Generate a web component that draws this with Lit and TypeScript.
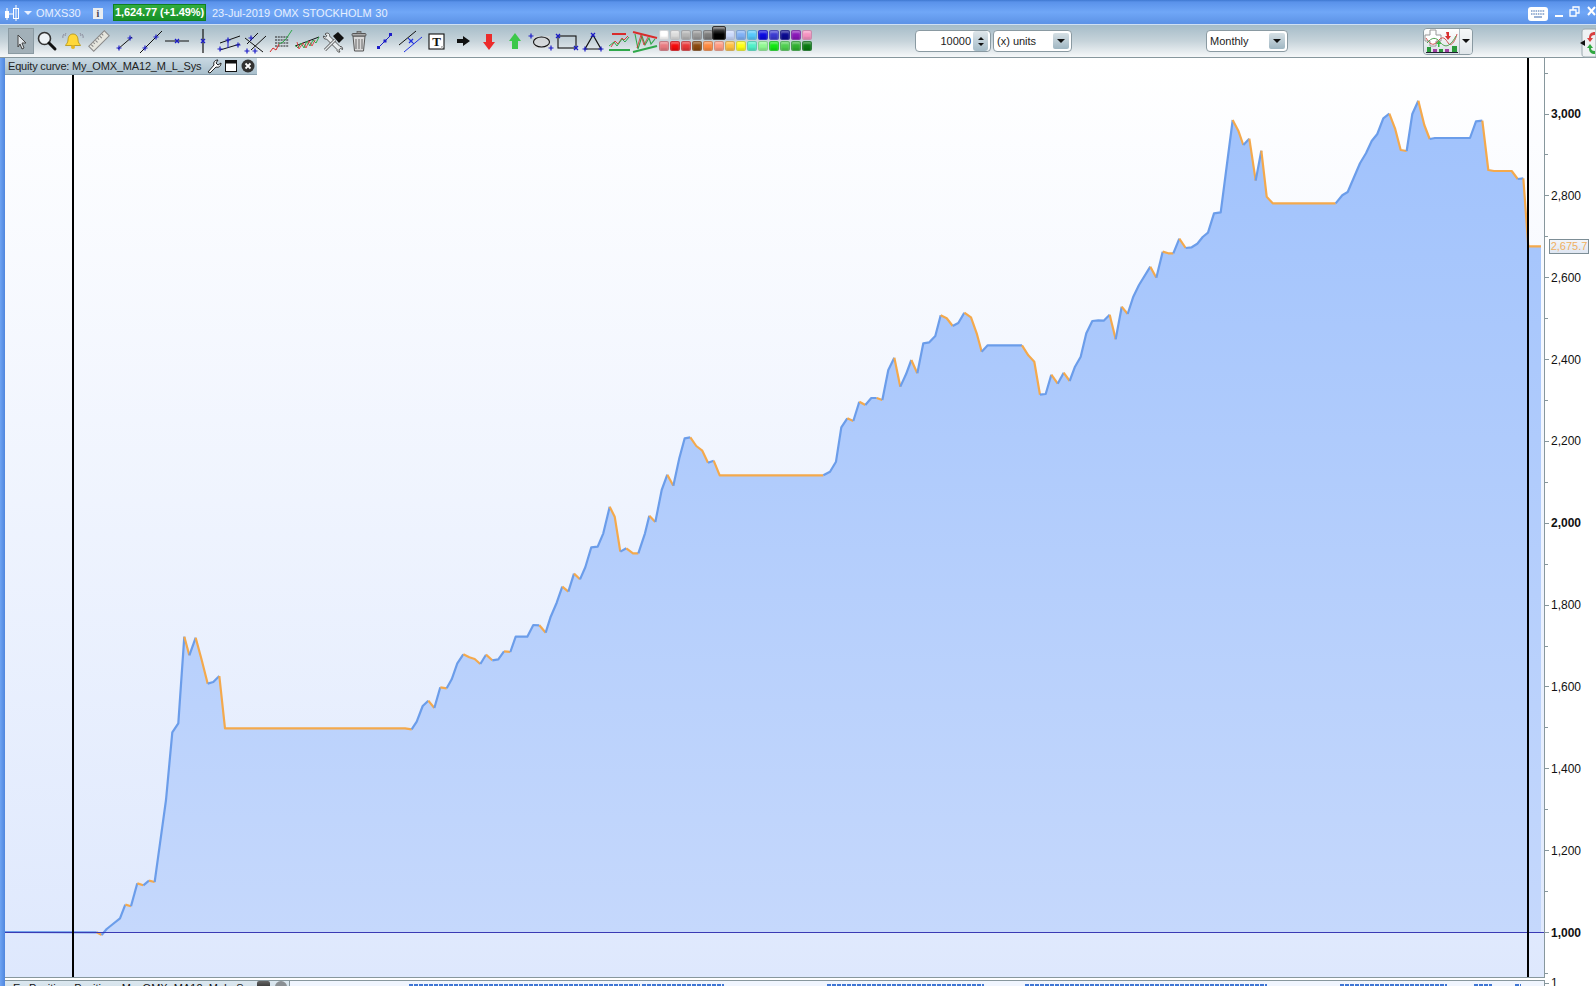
import { LitElement, html, css, svg } from "lit";
import { customElement } from "lit/decorators.js";

type P = [number, number];
const crop = (ox: number, oy: number, pts: number[][]): P[] => pts.map(([x, y]) => [ox + x / 3, oy + y / 3] as P);

const curve: P[] = [
  [5, 932],
  ...crop(60, 620, [[110,937],[125,945],[140,927],[155,915],[180,895],[196,854],[213,859],[232,790],[250,796],[267,782],[284,786],[300,670],[318,540],[337,337],[355,310],[373,50],[388,106],[407,53],[425,120],[443,191],[460,186],[478,168],[495,325],[1035,325]]),
  ...crop(400, 420, [[35,928],[50,905],[68,858],[85,842],[103,864],[121,802],[140,805],[155,778],[172,730],[190,703],[208,712],[224,717],[241,732],[258,704],[277,721],[295,718],[312,694],[331,696],[347,650],[382,650],[400,615],[418,616],[437,638],[452,590],[470,548],[487,500],[505,515],[522,461],[540,478],[556,442],[574,382],[593,380],[610,340],[629,260],[644,290],[661,395],[679,385],[699,400],[715,400],[735,340],[748,287],[766,306],[785,210],[802,164],[820,197],[838,115],[854,55],[871,52],[889,78],[907,92],[924,128],[941,122],[959,166],[1270,166]]),
  ...crop(820, 220, [[30,755],[48,725],[64,622],[82,595],[100,603],[118,545],[136,555],[154,534],[170,534],[187,540],[205,450],[223,413],[241,500],[258,463],[274,420],[292,460],[310,370],[328,367],[346,348],[362,286],[380,295],[398,318],[415,309],[433,278],[453,292],[470,340],[485,395],[503,376],[606,376],[625,406],[643,425],[660,524],[677,522],[694,464],[713,491],[731,458],[749,483],[765,440],[782,410],[799,340],[817,303],[835,301],[851,302],[869,284],[887,358],[905,260],[923,282],[940,230],[957,195],[991,140],[1009,173],[1028,95],[1045,100],[1060,100],[1078,56],[1097,84],[1115,82],[1132,71]]),
  ...crop(1190, 90, [[38,441],[54,428],[72,370],[92,367],[128,90],[145,122],[160,165],[178,146],[197,272],[214,182],[230,320],[248,340],[437,340],[457,316],[473,306],[510,220],[528,190],[545,153],[562,132],[580,85],[598,71],[615,115],[632,180],[650,183],[667,72],[685,32],[703,105],[719,147],[735,144],[840,144],[858,94],[877,92],[895,240],[912,243],[965,243],[983,267],[1000,265],[1015,469],[1053,469]]),
];

const BLUE = "#6b9dea";
const ORANGE = "#f4a94c";

function segments(): { d: string; c: string }[] {
  const out: { d: string; c: string }[] = [];
  let cur = BLUE;
  let run = `M${curve[0][0]} ${curve[0][1]}`;
  for (let i = 1; i < curve.length; i++) {
    const dy = curve[i][1] - curve[i - 1][1];
    const c = dy > 0.4 ? ORANGE : dy < -0.4 ? BLUE : cur;
    if (c !== cur) {
      out.push({ d: run, c: cur });
      run = `M${curve[i - 1][0]} ${curve[i - 1][1]}`;
      cur = c;
    }
    run += `L${curve[i][0].toFixed(1)} ${curve[i][1].toFixed(1)}`;
  }
  out.push({ d: run, c: cur });
  return out;
}

const yOf = (v: number) => 932 - (v - 1000) * 0.40925;
const fillPath =
  "M110 932" + curve.slice(1).map((p) => `L${p[0].toFixed(1)} ${p[1].toFixed(1)}`).join("") + "L1541 932Z";

const cross = (x: number, y: number, c = "#1c1cc8") =>
  svg`<path d="M${x - 2.5} ${y}h5M${x} ${y - 2.5}v5" stroke=${c} stroke-width="1.2" fill="none"/>`;
const xcross = (x: number, y: number, c = "#1c1cc8") =>
  svg`<path d="M${x - 2} ${y - 2}l4 4M${x + 2} ${y - 2}l-4 4" stroke=${c} stroke-width="1.3" fill="none"/>`;
const ln = (x1: number, y1: number, x2: number, y2: number, c = "#111", w = 1) =>
  svg`<line x1=${x1} y1=${y1} x2=${x2} y2=${y2} stroke=${c} stroke-width=${w}/>`;

const G = "#2fa84a";
const R = "#d92b2b";
const B = "#1c1cc8";

const icons = [
  svg`<path d="M10 7l8 8h-4l2 5-2 1-2-5-2 3z" fill="#dfe4e8" stroke="#444" stroke-width="1"/>`,
  svg`<circle cx="10.5" cy="10.5" r="6" fill="#eef3f6" stroke="#333" stroke-width="1.6"/><line x1="15" y1="15" x2="21" y2="21" stroke="#111" stroke-width="3" stroke-linecap="round"/>`,
  svg`<path d="M13 6c-3.500 0-5 3-5 6 0 3-2 4-2.500 5.500h15c-.5-1.500-2.500-2.500-2.500-5.500 0-3-1.500-6-5-6z" fill="#ffd83a" stroke="#b09010" stroke-width=".8"/><circle cx="13" cy="19" r="2" fill="#e8b820"/><path d="M4 6c-1 1-1.500 3-1 4M6 5c-.7.7-1 2-.8 3M22 6c1 1 1.500 3 1 4M20 5c.7.7 1 2 .8 3" stroke="#889" fill="none" stroke-width=".9"/>`,
  svg`<g transform="rotate(-45 13 13)"><rect x="2" y="9.500" width="22" height="7" fill="#e6e6de" stroke="#8a8a8a"/><path d="M5 10v3M8 10v2M11 10v3M14 10v2M17 10v3M20 10v2" stroke="#888"/></g>`,
  svg`${ln(6, 21, 20, 9)}${cross(7, 20)}${cross(18, 10)}`,
  svg`${ln(2, 25, 24, 3)}${cross(7, 20, B)}${cross(18, 9, B)}`,
  svg`${ln(1, 13, 25, 13)}${xcross(13, 13)}`,
  svg`${ln(13, 1, 13, 25, "#111", 1.2)}${xcross(13, 13)}`,
  svg`${ln(4, 15, 24, 8)}${ln(4, 22, 24, 16)}${ln(12, 12, 12, 20, B)}${cross(4, 21)}${cross(12, 12)}${cross(22, 17)}`,
  svg`${ln(5, 16, 16, 5)}${ln(9, 22, 24, 8)}${ln(3, 10, 21, 24)}${cross(5, 23)}${cross(13, 23)}${cross(9, 10)}`,
  svg`<path d="M7 9h14M7 12h14M7 15h14M7 18h14" stroke="#222" stroke-width="1.2" stroke-dasharray="2 .8"/><path d="M2 24l3-4 3 2 3-6" stroke=${R} fill="none"/><path d="M11 16l4-2 3-3 6-9" stroke=${G} fill="none"/>`,
  svg`${ln(1, 18, 25, 9)}<path d="M1 17l3 3 3-5 3 5 3-7 3 5 3-6 3 3 3-6" fill="none" stroke=${G}/><path d="M3 14l2 7 4-6 3 5 3-7 3 5 3-6" fill="none" stroke=${R} stroke-width=".8"/>`,
  svg`<path d="M5 6c1.500-1.500 4-1 4.500.5 .2.7 0 1.500 0 1.500L20 18.500c1.500-.3 3 1 2.500 3l-2-1.200-1.700 1.700 1.200 2c-2 .5-3.300-1-3-2.500L6.500 11c-2 .5-3.500-1-3-3l2 1.200 1.400-1.400z" fill="#e8ecee" stroke="#444" stroke-width=".9"/><path d="M5 22l10-10" stroke="#555" stroke-width="3"/><path d="M5 22l10-10" stroke="#e8ecee" stroke-width="1.400"/><path d="M13 8l5-4 6 6-5 5z" fill="#111"/>`,
  svg`<path d="M7 8h12l-1.500 15h-9z" fill="#d8d8d8" stroke="#555"/><path d="M10 11v10M13 11v10M16 11v10" stroke="#666"/><rect x="6" y="5.500" width="14" height="2.500" rx="1" fill="#aaa" stroke="#555"/><rect x="11" y="3.500" width="4" height="2" fill="#999" stroke="#555" stroke-width=".7"/>`,
  svg`${ln(7, 19, 19, 7, B)}<rect x="5" y="18" width="3" height="3" fill=${B}/><rect x="17" y="5" width="3" height="3" fill=${B}/><rect x="11.500" y="11.500" width="3" height="3" fill=${B}/>`,
  svg`${ln(1, 17, 18, 3)}${ln(6, 24, 24, 9, "#2030e0")}${xcross(13, 13, "#2030e0")}${ln(10, 10, 16, 16, "#2030e0")}`,
  svg`<rect x="5" y="6" width="15" height="15" fill="#fff" stroke="#111" stroke-width="1.1"/><path d="M17 21l3-3h-3z" fill="#bbb"/><text x="12.500" y="18" text-anchor="middle" class="t">T</text>`,
  svg`<path d="M7 11h6V8l7 5-7 5v-3H7z" fill="#111"/>`,
  svg`<path d="M10 6h6v8h3l-6 8-6-8h3z" fill="#ec2b2b"/>`,
  svg`<path d="M10 21v-8H7l6-8 6 8h-3v8z" fill="#3cc84a"/>`,
  svg`<rect x="5" y="8" width="17" height="12" fill="#d8d8d8" opacity=".7"/><ellipse cx="13.500" cy="14" rx="8" ry="5" fill="none" stroke="#111" stroke-width="1.1"/>${cross(3, 8)}${cross(23, 20)}`,
  svg`<rect x="4" y="8" width="18" height="12" fill="none" stroke="#111" stroke-width="1.1"/>${xcross(4, 8)}${xcross(22, 20)}`,
  svg`<path d="M13 7L5 21h16z" fill="none" stroke="#111" stroke-width="1.2"/>${xcross(13, 7)}${cross(5, 21)}${cross(21, 21)}`,
  svg`<path d="M6 6h14" stroke=${R} stroke-width="2"/><path d="M3 22h21" stroke=${G} stroke-width="2"/><path d="M5 19l4-6 3 3 4-6 2 2 4-4" fill="none" stroke=${R} stroke-width=".9"/><path d="M3 18l5-4 3 4 5-7 3 3 4-5" fill="none" stroke=${G} stroke-width="1"/>`,
  svg`<path d="M1 4l24 6" stroke=${R} stroke-width="2"/><path d="M1 24l24-6" stroke=${G} stroke-width="2"/><path d="M3 6l3 15 4-13 3 9 4-7 2 6 4-5" fill="none" stroke=${G} stroke-width="1.1"/><path d="M5 20l4-13 3 10 4-8" fill="none" stroke=${R} stroke-width=".8"/>`,
];

const paletteTop = ["#ffffff","#dcdcdc","#b5b5b5","#9a9a9a","#7c7c7c","#000000","#c9d8fb","#7fb0f5","#55c8fb","#0a0ae0","#3a3ad0","#0a0a90","#8a18b8","#f592c0"];
const paletteBot = ["#e87a80","#f40a0a","#e83838","#8a4a10","#ff8a40","#ff9a80","#ffc040","#ffff10","#50f0c8","#90f890","#10e810","#50d050","#30b030","#087a10"];

const blueRuns: [number, number][] = [[409, 231],[642, 82],[827, 157],[1025, 242],[1340, 107],[1474, 18],[1515, 6]];

const segs = segments();
const ticks: number[] = [];
for (let v = 900; v <= 3100; v += 100) ticks.push(v);

@customElement("app-root")
export class AppRoot extends LitElement {
  static styles = css`
    :host { display: block; width: 1596px; height: 986px; overflow: hidden; background: #fff; font-family: "Liberation Sans", Arial, sans-serif; font-size: 11px; color: #111; }
    .title { height: 25px; box-sizing: border-box; padding-top: 2px; display: flex; align-items: center; background: linear-gradient(#3f78d0 0, #5a92ea 2px, #70a7f7 50%, #5c92e6 100%); border-bottom: 1px solid #cfe0f4; color: #e6efff; }
    .candle { margin-left: 4px; display: block; }
    .caret { width: 0; height: 0; border: 4px solid transparent; border-top: 4px solid #e8f0ff; border-bottom: 0; margin-left: 3px; }
    .sym { margin-left: 4px; width: 57px; }
    .info { width: 10px; height: 11px; background: #e8edf2; color: #445; font: bold 10px "Liberation Serif", serif; text-align: center; line-height: 11px; }
    .badge { margin-left: 10px; width: 93px; height: 17px; margin-top: -2px; box-sizing: border-box; background: linear-gradient(#31ad3f, #169026); border: 1px solid #0f8020; color: #fff; font-weight: bold; text-align: center; line-height: 14px; white-space: nowrap; letter-spacing: -.1px; }
    .date { margin-left: 6px; word-spacing: .5px; }
    .win { margin-left: auto; margin-top: -2px; display: flex; align-items: center; }
    .win svg { display: block; }
    .tool { height: 33px; box-sizing: border-box; display: flex; align-items: center; background: linear-gradient(#a5bcc8, #c6d3da 50%, #f6f8f9); border-bottom: 1px solid #87979d; padding-left: 8px; position: relative; }
    .ic { width: 26px; height: 26px; flex: none; display: block; }
    .ic.on { background: #a2b0b8; box-shadow: inset 0 0 0 1px #8a9aa2; }
    .ic .t { font: bold 13px "Liberation Serif", serif; fill: #111; }
    .palette { margin-left: 1px; display: grid; grid-template-columns: repeat(14, 11px); grid-auto-rows: 11px; width: 154px; }
    .cell { width: 10px; height: 10px; border-radius: 2px; box-sizing: border-box; border: 1px solid rgba(120,130,140,.35); box-shadow: inset 0 2px 2px rgba(255,255,255,.35), inset 0 -2px 2px rgba(0,0,0,.12); }
    .cell.sel { width: 14px; height: 14px; margin: -4px 0 0 -2px; background: linear-gradient(#666, #000 60%) !important; border-color: #333; position: relative; }
    .field { height: 22px; box-sizing: border-box; border: 1px solid #8a9aa2; border-radius: 4px; background: #fff; display: flex; align-items: center; color: #222; }
    .spin { margin-left: 102px; width: 76px; justify-content: flex-end; padding-right: 2px; }
    .spin .v { margin-right: 2px; }
    .spinb { width: 15px; height: 20px; background: linear-gradient(#dfe6ea, #a5bcc8); border-radius: 3px; display: flex; flex-direction: column; align-items: center; justify-content: center; gap: 3px; }
    .up { width: 0; height: 0; border: 3px solid transparent; border-top: 0; border-bottom: 3px solid #111; }
    .dn { width: 0; height: 0; border: 3px solid transparent; border-bottom: 0; border-top: 3px solid #111; }
    .sel-f { justify-content: space-between; padding: 0 2px 0 3px; }
    .units { margin-left: 2px; width: 79px; }
    .monthly { margin-left: 134px; width: 82px; }
    .selb { width: 16px; height: 16px; background: linear-gradient(#d6e0e5, #9fb6c2); border-radius: 2px; display: flex; align-items: center; justify-content: center; }
    .selb .dn { border-width: 4px 4px 0; }
    .style { margin-left: 135px; width: 50px; height: 27px; box-sizing: border-box; border: 1px solid #8a9aa2; border-radius: 4px; display: flex; align-items: center; overflow: hidden; }
    .style .art { width: 35px; height: 25px; background: linear-gradient(#fff, #d8e0e4); border-right: 1px solid #b0bcc2; display: block; flex: none; }
    .style .arrow { flex: 1; display: flex; justify-content: center; background: linear-gradient(#f6f8f8, #e0e6ea); height: 100%; align-items: center; }
    .style .arrow .dn { border-width: 4px 4px 0; }
    .edge { margin-left: auto; margin-top: 3px; display: block; }
    .main { display: flex; height: 928px; }
    .frame { width: 5px; flex: none; background: linear-gradient(90deg, #6ea3f2, #4f86de); }
    .mid { width: 1540px; flex: none; display: flex; flex-direction: column; position: relative; }
    .plot { height: 920px; box-sizing: border-box; border-right: 1px solid #87979d; border-bottom: 1px solid #87979d; }
    .plot svg { display: block; }
    .gap { height: 2px; }
    .low { flex: 1; box-sizing: border-box; border-top: 1px solid #87979d; border-right: 1px solid #87979d; background: #f0f5fe; position: relative; overflow: hidden; }
    .lowhead { width: 285px; height: 18px; box-sizing: border-box; background: linear-gradient(#dce8f0, #c4d4de); border-right: 1px solid #87979d; padding: 1px 0 0 8px; white-space: nowrap; color: #111; line-height: 13px; display: flex; }
    .lh-sq { position: absolute; left: 252px; top: 0; width: 13px; height: 13px; border-radius: 2px; background: linear-gradient(#666, #000); }
    .lh-ci { position: absolute; left: 270px; top: 0; width: 12px; height: 12px; border-radius: 50%; background: #8a8f93; }
    .run { position: absolute; top: 3px; height: 4px; background: repeating-linear-gradient(90deg, #3f76d4 0 4px, transparent 4px 5px); }
    .tab { position: absolute; left: 0; top: 0; width: 252px; height: 17px; box-sizing: border-box; display: flex; align-items: center; background: linear-gradient(#c9d9e3, #a9bfcc); border-bottom: 1px solid #8aa0ae; color: #222; padding-left: 3px; white-space: nowrap; }
    .tab svg { display: block; flex: none; }
    .tab .name { width: 198px; letter-spacing: -.18px; }
    .axis { flex: 1; position: relative; }
    .axis svg { display: block; }
    .lbl { font-size: 12px; fill: #111; }
    .lbl.b { font-weight: bold; }
    .last { position: absolute; left: 4px; top: 181px; width: 40px; height: 15px; box-sizing: border-box; border: 1px solid #7d8e96; background: linear-gradient(#f2f5fa, #dfe6f2); color: #f0b060; font-size: 11px; line-height: 13px; text-align: center; }
  `;

  render() {
    return html`
      <div class="title">
        <svg class="candle" width="17" height="18" viewBox="0 0 17 18"><rect x="1" y="7" width="4" height="7" fill="#fff"/><line x1="3" y1="4" x2="3" y2="16" stroke="#fff"/><rect x="9.500" y="4.500" width="5" height="10" fill="none" stroke="#fff"/><line x1="12" y1="1" x2="12" y2="17" stroke="#fff"/><line x1="5" y1="10" x2="9" y2="10" stroke="#fff"/></svg>
        <span class="caret"></span>
        <span class="sym">OMXS30</span>
        <span class="info">i</span>
        <span class="badge">1,624.77 (+1.49%)</span>
        <span class="date">23-Jul-2019 OMX STOCKHOLM 30</span>
        <span class="win">
          <svg width="68" height="24" viewBox="0 0 68 24">
            <rect x="0" y="7" width="20" height="14" rx="3" fill="#fff"/>
            <path d="M3 11h14M3 14h14" stroke="#7a9ac8" stroke-width="1.6" stroke-dasharray="1.500 .8"/><path d="M6 17h8" stroke="#7a9ac8" stroke-width="1.500"/>
            <rect x="27" y="15" width="8" height="2" fill="#fff"/>
            <path d="M42 10h6v6h-6zM45 10V7h6v6h-3" fill="none" stroke="#fff" stroke-width="1.300"/>
            <path d="M60 7l7 8M67 7l-7 8" stroke="#fff" stroke-width="2"/>
          </svg>
        </span>
      </div>
      <div class="tool">
        ${icons.map((ic, i) => html`<svg class="ic ${i === 0 ? "on" : ""}" viewBox="0 0 26 26">${ic}</svg>`)}
        <div class="palette">
          ${paletteTop.map((c, i) => html`<span class="cell ${i === 5 ? "sel" : ""}" style="background:${c}"></span>`)}
          ${paletteBot.map((c) => html`<span class="cell" style="background:${c}"></span>`)}
        </div>
        <div class="field spin"><span class="v">10000</span><span class="spinb"><span class="up"></span><span class="dn"></span></span></div>
        <div class="field sel-f units"><span>(x) units</span><span class="selb"><span class="dn"></span></span></div>
        <div class="field sel-f monthly"><span>Monthly</span><span class="selb"><span class="dn"></span></span></div>
        <div class="style">
          <svg class="art" viewBox="0 0 35 25">
            <path d="M1 6h5V1h6v5h5v6h-5v5H6v-5H1z" fill="#fff" stroke="#999"/>
            <path d="M2 9c5 8 8 8 13 2s8 2 10 4 6-2 8-10" fill="none" stroke="#d05050"/>
            <path d="M3 14c5-6 9-6 13-1s9 7 16-6" fill="none" stroke="#50a050"/>
            <path d="M13 16h2v-3h-2l2.500-3 3 3h-2v3z" fill="#2fb83f" transform="translate(-1 2)"/>
            <path d="M22 3h3v4h2l-3 4-3-4h2z" fill="#d83030"/>
            <rect x="3" y="18" width="4" height="5" fill="#2a9a3a"/><rect x="9" y="20" width="4" height="3" fill="#a040a0"/><rect x="15" y="20" width="4" height="3" fill="#2a9a3a"/><rect x="21" y="20" width="4" height="3" fill="#a040a0"/><rect x="28" y="17" width="5" height="6" fill="#2a9a3a"/>
            <line x1="2" y1="23.500" x2="34" y2="23.500" stroke="#223"/>
          </svg>
          <span class="arrow"><span class="dn"></span></span>
        </div>
        <svg class="edge" width="17" height="30" viewBox="0 0 17 30">
          <path d="M17 1H6C4 1 3 2 3 4v22c0 2 1 3 3 3h11z" fill="#eef1f3" stroke="#9aa8ae"/>
          <path d="M1 15l5-3v6z" fill="#111"/>
          <path d="M16 4c-4 0-6 2-6 6H8l3 4 3-4h-2c0-2 1-3 4-3z" fill="#d84040"/>
          <path d="M16 26c-4 0-6-2-6-6H8l3-4 3 4h-2c0 2 1 3 4 3z" fill="#30a840"/>
        </svg>
      </div>
      <div class="main">
        <div class="frame"></div>
        <div class="mid">
          <div class="plot">
            <svg width="1539" height="919" viewBox="5 58 1539 919">
              <defs>
                <linearGradient id="bg" x1="0" y1="0" x2="0" y2="1"><stop offset="0" stop-color="#ffffff"/><stop offset="1" stop-color="#dee8fd"/></linearGradient>
                <linearGradient id="fi" gradientUnits="userSpaceOnUse" x1="0" y1="100" x2="0" y2="932"><stop offset="0" stop-color="#a0c2fc"/><stop offset="1" stop-color="#c5d8fc"/></linearGradient>
              </defs>
              <rect x="5" y="58" width="1539" height="919" fill="url(#bg)"/>
              <path d=${fillPath} fill="url(#fi)"/>
              ${segs.map((s) => svg`<path d=${s.d} fill="none" stroke=${s.c} stroke-width="2.200" stroke-linejoin="round"/>`)}
              <line x1="5" y1="932.500" x2="1544" y2="932.500" stroke="#3a3ab4"/>
              <rect x="72" y="58" width="2" height="919" fill="#000"/>
              <rect x="1527" y="58" width="2" height="919" fill="#000"/>
            </svg>
          </div>
          <div class="gap"></div>
          <div class="low">
            <div class="lowhead">Ex Position: Positions My_OMX_MA12_M_L_Sys</div>
            <span class="lh-sq"></span><span class="lh-ci"></span>
            ${blueRuns.map(([x, w]) => html`<span class="run" style="left:${x - 5}px;width:${w}px"></span>`)}
          </div>
          <div class="tab">
            <span class="name">Equity curve: My_OMX_MA12_M_L_Sys</span>
            <svg width="16" height="16" viewBox="0 0 16 16"><path d="M2 14l6-7c-1-3 1-5 4-5l-2 3 2 2 3-2c0 3-2 5-5 4l-6 6z" fill="#fff" stroke="#222"/></svg>
            <svg width="17" height="16" viewBox="0 0 17 16" style="margin-left:1px"><rect x="2.500" y="2.500" width="11" height="11" fill="#fff" stroke="#111"/><rect x="2" y="2" width="12" height="3.500" fill="#111"/></svg>
            <svg width="16" height="16" viewBox="0 0 16 16"><circle cx="8" cy="8" r="6.500" fill="#333"/><path d="M5.500 5.500l5 5M10.500 5.500l-5 5" stroke="#fff" stroke-width="1.800"/></svg>
          </div>
        </div>
        <div class="axis">
          <svg width="51" height="928" viewBox="1545 58 51 928">
            ${ticks.map((v) => {
              const y = Math.round(yOf(v)) + 0.5;
              const major = v % 200 === 0;
              return svg`<line x1="1545" y1=${y} x2=${major ? 1549 : 1548} y2=${y} stroke="#87979d"/>`;
            })}
            ${[3000, 2800, 2600, 2400, 2200, 2000, 1800, 1600, 1400, 1200, 1000].map((v) => {
              const bold = v % 1000 === 0;
              const t = `${Math.floor(v / 1000)},${String(v % 1000).padStart(3, "0")}`;
              return svg`<text class="lbl ${bold ? "b" : ""}" x="1551" y=${yOf(v) + 4.5}>${t}</text>`;
            })}
            <line x1="1545" y1="983.500" x2="1549" y2="983.500" stroke="#87979d"/>
            <text class="lbl" x="1551" y="987">1</text>
          </svg>
          <div class="last">2,675.7</div>
        </div>
      </div>
    `;
  }
}
